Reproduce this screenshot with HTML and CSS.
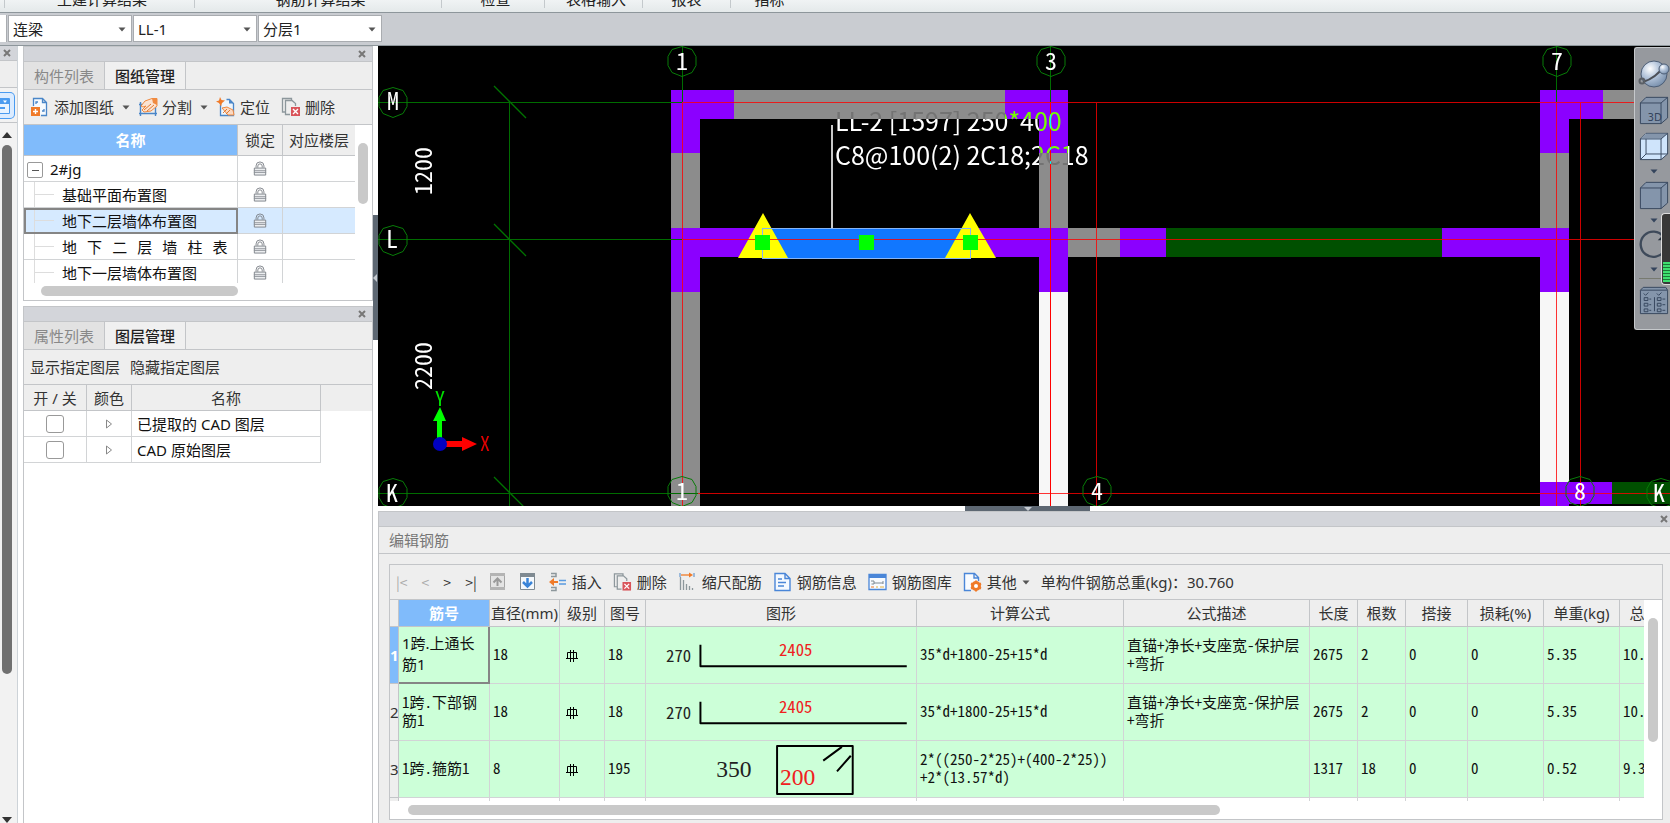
FILE: index.html
```html
<!DOCTYPE html>
<html lang="zh-CN">
<head>
<meta charset="utf-8">
<meta name="viewport" content="width=device-width, initial-scale=1">
<title>编辑钢筋</title>
<link rel="stylesheet" href="styles.css">
</head>
<body>
<svg class="defs" aria-hidden="true">
  <defs>
    <symbol id="lock" viewBox="0 0 16 18">
      <path d="M3.500 8V6a4.500 4.500 0 0 1 9 0v2M5.500 8V6.200a2.500 2.500 0 0 1 5 0V8" fill="none" stroke="#777c82"/>
      <path d="M1.500 8.500h13v8h-13z" fill="#eceef0" stroke="#777c82"/>
      <path d="M1 11.500h14M1 13.500h14" stroke="#8b9096"/>
    </symbol>
    <symbol id="caret" viewBox="0 0 8 5"><path d="M0.500 0.500h7L4 4.500z" fill="currentColor"/></symbol>
    <symbol id="del" viewBox="0 0 20 20">
      <path d="M4.500 15H1.500V1.500h9V4M14.500 9V6.500L11 3.500H4.500v14H9" fill="none" stroke="#8d979c" stroke-width="1.300"/>
      <path d="M10 10h9v9h-9z" fill="#d9545a"/>
      <path d="M12 12l5 5m0-5l-5 5" stroke="#fff" stroke-width="1.400"/>
    </symbol>
    <symbol id="rebar" viewBox="0 0 12 12">
      <path d="M1.500 2.500h9v6h-9zM4.500 0v12M7.500 0v12M0 8.500h12" fill="none" stroke="#000"/>
    </symbol>
  </defs>
</svg>

<header class="ribbon">
  <span class="group group-a">土建计算结果</span>
  <span class="group group-b">钢筋计算结果</span>
  <span class="group group-c">检查</span>
  <span class="group group-d">表格输入</span>
  <span class="group group-e">报表</span>
  <span class="group group-f">指标</span>
</header>

<div class="picker-bar">
  <span class="picker-stub"></span>
  <label class="picker"><select aria-label="构件类型"><option>连梁</option></select><svg class="caret"><use href="#caret"/></svg></label>
  <label class="picker"><select aria-label="构件名称"><option>LL-1</option></select><svg class="caret"><use href="#caret"/></svg></label>
  <label class="picker"><select aria-label="分层"><option>分层1</option></select><svg class="caret"><use href="#caret"/></svg></label>
</div>

<div class="workspace">
  <aside class="rail">
    <div class="dock-head"><button class="close" aria-label="关闭"><svg viewBox="0 0 8 8"><path d="M1 1l6 6M7 1L1 7"/></svg></button></div>
    <div class="rail-tabs"></div>
    <div class="rail-tool">
      <button class="rail-button" aria-label="构件">
        <svg viewBox="0 0 12 20"><path d="M-6 2.500h15.500v15H-6" fill="#e8f3ff" stroke="#4a9bf0"/><path d="M-6 3h15v5H-6z" fill="#4a9bf0"/><path d="M3 4.500h4l-2 2.500z" fill="#fff"/><path d="M-4 12h9" stroke="#4a9bf0" stroke-width="2"/></svg>
      </button>
    </div>
    <div class="rail-scroll">
      <svg class="rail-arrow" viewBox="0 0 10 6"><path d="M0 6h10L5 0z" fill="#333"/></svg>
      <div class="rail-thumb"></div>
      <svg class="rail-arrow" viewBox="0 0 10 6"><path d="M0 0h10L5 6z" fill="#333"/></svg>
    </div>
  </aside>

  <div class="docks">
    <section class="dock drawings">
      <div class="dock-head"><button class="close" aria-label="关闭"><svg viewBox="0 0 8 8"><path d="M1 1l6 6M7 1L1 7"/></svg></button></div>
      <div class="tabs"><button class="tab">构件列表</button><button class="tab active">图纸管理</button></div>
      <div class="tools">
        <button class="tool"><svg viewBox="0 0 20 20"><path d="M3.500 9V1.500h9l4 4v13H11M12.500 1.500v4h4" fill="#f6fafe" stroke="#4a86c8" stroke-width="1.300"/><path d="M6 7V5h2M14 12v2h-2" fill="none" stroke="#4a86c8" stroke-width="1.300"/><path d="M1 10l9 0v9H1z" fill="#f07a28"/><path d="M5.500 12v5M3 14.500h5" stroke="#fff" stroke-width="1.400"/></svg>添加图纸</button>
        <svg class="caret"><use href="#caret"/></svg>
        <button class="tool"><svg viewBox="0 0 20 20"><path d="M1 7.500h18M1 16.500h18M2.500 5v14M17.500 5v14" fill="none" stroke="#4a86c8" stroke-width="1.400"/><path d="M3 9l4-5 7-2.500h5V9l-6 5-7 1-2-2 4-4-3 1z" fill="#fbe3d2" stroke="#f08a40"/><path d="M14 1.500h5V8l-4-2z" fill="#f08a40"/><path d="M6 13l7-6M9 14l7-6" stroke="#e27a30"/></svg>分割</button>
        <svg class="caret"><use href="#caret"/></svg>
        <button class="tool"><svg viewBox="0 0 20 20"><path d="M4.500 8v10.500h13V6.500l-4-4h-3" fill="#eef5fc" stroke="#4a86c8" stroke-width="1.300"/><path d="M13 2.500v4h4.500z" fill="#4a86c8"/><path d="M4 0l1.500 3L9 3.500 6 6l-1 3.500L3 6 0 4.500l3-1z" fill="#f07a28"/><path d="M6 11l5-1 6 3 1 5h-6z" fill="#fbd9c2" stroke="#f08a40"/><path d="M7 16l4-4M10 17l4-4" stroke="#e27a30"/></svg>定位</button>
        <button class="tool"><svg viewBox="0 0 20 20"><use href="#del"/></svg>删除</button>
      </div>
      <div class="tree-area">
        <div class="tree-clip">
          <table class="tree">
            <colgroup><col class="c-name"><col class="c-lock"><col class="c-floor"></colgroup>
            <thead><tr><th class="picked">名称</th><th>锁定</th><th>对应楼层</th></tr></thead>
            <tbody>
              <tr><td class="root"><button class="toggle" aria-label="折叠"></button>2#jg</td><td class="lock"><svg><use href="#lock"/></svg></td><td></td></tr>
              <tr><td class="leaf">基础平面布置图</td><td class="lock"><svg><use href="#lock"/></svg></td><td></td></tr>
              <tr class="current"><td class="leaf">地下二层墙体布置图</td><td class="lock"><svg><use href="#lock"/></svg></td><td></td></tr>
              <tr><td class="leaf">地   下   二   层   墙   柱   表</td><td class="lock"><svg><use href="#lock"/></svg></td><td></td></tr>
              <tr><td class="leaf">地下一层墙体布置图</td><td class="lock"><svg><use href="#lock"/></svg></td><td></td></tr>
            </tbody>
          </table>
        </div>
        <div class="tree-vbar"><i></i></div>
        <div class="tree-hbar"><i></i></div>
      </div>
    </section>

    <section class="dock layers">
      <div class="dock-head"><button class="close" aria-label="关闭"><svg viewBox="0 0 8 8"><path d="M1 1l6 6M7 1L1 7"/></svg></button></div>
      <div class="tabs"><button class="tab">属性列表</button><button class="tab active">图层管理</button></div>
      <div class="tools plain"><button class="tool">显示指定图层</button><button class="tool">隐藏指定图层</button></div>
      <div class="layer-area">
        <table class="layer-table">
          <colgroup><col class="l-on"><col class="l-color"><col class="l-name"></colgroup>
          <thead><tr><th>开 / 关</th><th>颜色</th><th>名称</th></tr></thead>
          <tbody>
            <tr><td class="mid"><input type="checkbox" id="cad-extracted"></td><td class="mid"><svg class="tri" viewBox="0 0 8 10"><path d="M1.500 1v8L6.500 5z"/></svg></td><td><label for="cad-extracted">已提取的 CAD 图层</label></td></tr>
            <tr><td class="mid"><input type="checkbox" id="cad-raw"></td><td class="mid"><svg class="tri" viewBox="0 0 8 10"><path d="M1.500 1v8L6.500 5z"/></svg></td><td><label for="cad-raw">CAD 原始图层</label></td></tr>
          </tbody>
        </table>
      </div>
    </section>
  </div>

  <div class="splitter"><button class="grip" aria-label="收起"><svg viewBox="0 0 4 8"><path d="M4 0v8L0 4z" fill="#c5cad0"/></svg></button></div>

  <main class="stage">
    <div class="canvas">
      <svg class="plan" viewBox="378 46 1292 461" preserveAspectRatio="xMinYMin slice">
        <g shape-rendering="crispEdges">
          <g fill="#8c8c8c">
            <path d="M734 90h271v29H734zM671 153h29v75h-29zM671 292h29v215h-29zM1039 153h29v75h-29zM1068 228h52v29h-52zM1603 90h67v29h-67zM1540 153h29v75h-29z"/>
          </g>
          <path fill="#8b00ff" d="M671 90h63v29h-34v34h-29zM671 228h92v29h-63v35h-29zM1005 90h63v63h-29v-34h-34zM970 228h98v64h-29v-35h-69zM1120 228h46v29h-46zM1442 228h127v64h-29v-35h-98zM1540 90h63v29h-34v34h-29zM1540 482h72v22h-43v3h-29z"/>
          <path fill="#005000" d="M1166 228h276v29h-276zM1612 482h58v22h-58z"/>
          <path fill="#f7f7f7" d="M1039 292h29v215h-29zM1540 292h29v190h-29z"/>
          <path fill="#1177ff" d="M763 228h207v30H763z"/>
        </g>
        <path fill="#ffff00" d="M763 213l25 45h-50zM970 213l26 45h-51z"/>
        <g shape-rendering="crispEdges" fill="none">
          <path d="M763 228.500h207.500v29.500H762.500v-29.500z" stroke="#86b4f5"/>
          <path d="M682 102.500h988M682 239.500h73M770 239.500h89M874 239.500h89M978 239.500h692M698 493.500h972M682.500 102v405M1096.500 102v405M1556.500 102v405M1580.500 102v405" stroke="#ff0000" stroke-opacity="0.800"/>
          <path d="M1050.500 102v405" stroke="#ff0000"/>
          <path d="M378 102.500h304M378 239.500h304M378 493.500h320M509.500 102v405M682.500 46v56M1050.500 46v56M1556.500 46v56" stroke="#006c00"/>
        </g>
        <path fill="#00ff00" d="M755 235h15v15h-15zM859 235h15v15h-15zM963 235h15v15h-15z"/>
        <path d="M494 86l32 32M494 224l32 32M494 477l32 32" stroke="#007400" stroke-width="1.300" fill="none"/>
        <g fill="none" stroke="#087c08">
          <path id="bubble" d="M682 46.500l10 3 4 7v9l-4 7-10 4-10-4-4-7v-9l4-7z"/>
          <use href="#bubble" x="369"/><use href="#bubble" x="875"/><use href="#bubble" x="-289" y="41"/><use href="#bubble" x="-289" y="179"/><use href="#bubble" x="-289" y="432"/><use href="#bubble" y="430"/><use href="#bubble" x="415" y="430"/><use href="#bubble" x="898" y="430"/><use href="#bubble" x="979" y="432"/>
        </g>
        <g class="axis-label">
          <text x="682" y="70">1</text><text x="1051" y="70">3</text><text x="1557" y="70">7</text>
          <text x="393" y="110">M</text><text x="392" y="248">L</text><text x="392" y="502">K</text>
          <text x="682" y="500">1</text><text x="1097" y="500">4</text><text x="1580" y="500">8</text><text x="1659" y="502">K</text>
          <text transform="translate(432 171) rotate(-90)">1200</text>
          <text transform="translate(432 366) rotate(-90)">2200</text>
        </g>
        <path d="M832 125v103" stroke="#c8c8c8" stroke-width="2"/>
        <g class="beam-label"><text x="835" y="131">LL-2 [1597] 250*400</text><text x="835" y="165">C8@100(2) 2C18;2C18</text></g>
        <path d="M437 440v-19h-4l7-14 6 14h-4v19z" fill="#00ff00"/>
        <path d="M444 441h18v-4l15 7-15 7v-4h-18z" fill="#ff0000"/>
        <circle cx="440" cy="444" r="7" fill="#0000c0"/>
        <text class="ucs-y" x="440" y="406">Y</text><text class="ucs-x" x="485" y="451">X</text>
      </svg>

      <div class="viewbar">
        <button aria-label="动态观察"><svg viewBox="0 0 32 30"><defs><radialGradient id="ball" cx="0.350" cy="0.300" r="0.800"><stop offset="0" stop-color="#fff"/><stop offset="0.400" stop-color="#b9c9de"/><stop offset="1" stop-color="#6f87a5"/></radialGradient></defs><circle cx="16" cy="15" r="13" fill="url(#ball)" stroke="#4c5d75"/><path d="M5 23c9-3 15-7 20-15" fill="none" stroke="#4c5058" stroke-width="2"/><circle cx="26" cy="10" r="5" fill="url(#ball)" stroke="#4c5d75"/><circle cx="4" cy="22" r="2.500" fill="none" stroke="#5a5f66" stroke-width="2"/></svg></button>
        <button aria-label="三维"><svg viewBox="0 0 32 32"><path d="M1.500 8.500l6-6h23v22l-7 6h-22z" fill="#8495ab" stroke="#34445c"/><path d="M1.500 8.500h22v22M23.500 8.500l7-6" fill="none" stroke="#34445c"/><text class="cube-text" x="9" y="28">3D</text></svg></button>
        <button aria-label="线框"><svg viewBox="0 0 32 32"><path d="M1.500 8.500l6-6h23v22l-7 6h-22z" fill="#cfe4fb" stroke="#34445c"/><path d="M2 8l6-5h22l-6 5z" fill="#8495ab"/><path d="M1.500 8.500h22v22M23.500 8.500l7-6M7.500 8.500v16h23M7.500 24.500l-6 6" fill="none" stroke="#34445c"/></svg></button>
        <svg class="caret"><use href="#caret"/></svg>
        <button aria-label="实体"><svg viewBox="0 0 32 32"><path d="M1.500 8.500l6-6h23v22l-7 6h-22z" fill="#8495ab" stroke="#34445c"/><path d="M1.500 8.500h22v22M23.500 8.500l7-6" fill="none" stroke="#34445c"/></svg></button>
        <svg class="caret"><use href="#caret"/></svg>
        <button aria-label="旋转"><svg viewBox="0 0 32 32"><path d="M27 23a13.500 13.500 0 1 1-1-15" fill="none" stroke="#3e4a5a" stroke-width="2.500"/><path d="M29 3v9h-9z" fill="#26303c"/></svg></button>
        <svg class="caret"><use href="#caret"/></svg>
        <hr>
        <button aria-label="显示设置"><svg viewBox="0 0 32 32"><path d="M1.500 5.500l3-3h24l2 3v25h-29z" fill="#8495ab" stroke="#34445c"/><path d="M2 5.500h28" stroke="#34445c"/><path d="M5.500 13.500h4v3h-4zM5.500 19.500h4v3h-4zM5.500 25.500h4v3h-4zM19.500 13.500h4v3h-4zM19.500 19.500h4v3h-4zM19.500 25.500h4v3h-4zM5 9l2 2 3-3M19 9l2 2 3-3M11 15h2M11 21h2M11 27h2M25 15h3M25 21h3M25 27h3M16.500 13v15" fill="none" stroke="#34445c"/></svg></button>
      </div>
      <div class="meter"><i></i></div>
    </div>

    <div class="hsplitter"><button class="hgrip" aria-label="收起"><svg viewBox="0 0 8 4"><path d="M0 0h8L4 4z" fill="#c5cad0"/></svg></button></div>

    <section class="editor">
      <div class="dock-head"><button class="close" aria-label="关闭"><svg viewBox="0 0 8 8"><path d="M1 1l6 6M7 1L1 7"/></svg></button></div>
      <h2>编辑钢筋</h2>
      <div class="editor-body">
        <div class="frame">
          <div class="bar">
            <div class="nav"><button class="off">|&lt;</button><button class="off">&lt;</button><button>&gt;</button><button>&gt;|</button></div>
            <button class="tool icon-only" aria-label="上移"><svg viewBox="0 0 19 20"><path d="M2.500 1.500h14v16h-14z" fill="#e4e4e4" stroke="#a5a5a5"/><path d="M2 1h15v3H2zM2 15h15v3H2z" fill="#b4b4b4"/><path d="M9.500 14V7M5.500 10.500l4-4 4 4" fill="none" stroke="#9a9a9a" stroke-width="2"/></svg></button>
            <button class="tool icon-only" aria-label="下移"><svg viewBox="0 0 19 20"><path d="M2.500 1.500h14v16h-14z" fill="#f4f8fc" stroke="#7f8a92"/><path d="M2 1h15v4H2z" fill="#7f8a92"/><path d="M9.500 6v8M5 10l4.500 4.500L14 10" fill="none" stroke="#3a84d8" stroke-width="2.500"/></svg></button>
            <button class="tool"><svg viewBox="0 0 19 20"><path d="M3 1.500h5v3H3M3 18.500h5v-3H3" fill="none" stroke="#8d979c" stroke-width="1.500"/><path d="M1 10l5-4v3h4v2H6v3z" fill="#f07a28"/><path d="M11 8.500h7M11 12h7" stroke="#5a9be0" stroke-width="1.500"/></svg>插入</button>
            <button class="tool"><svg viewBox="0 0 19 20"><use href="#del"/></svg>删除</button>
            <button class="tool"><svg viewBox="0 0 19 20"><path d="M2.500 5v13M5.500 8v10M8.500 12v6M11.500 14v4M14.500 16v2" stroke="#8d979c" stroke-width="1.300"/><path d="M2 1v4M16 1v4" stroke="#4a86c8"/><path d="M3 3h9" stroke="#f07a28" stroke-width="1.300"/><path d="M11 0.500l4 2.500-4 2.500z" fill="#f07a28"/></svg>缩尺配筋</button>
            <button class="tool"><svg viewBox="0 0 19 20"><path d="M2 1.500h10l5 5v12H2zM12 1.500v5h5" fill="#f4f9ff" stroke="#4a86d8" stroke-width="1.400"/><path d="M5 7h4M5 10.500h8M5 14h6" stroke="#4a86d8" stroke-width="1.400"/></svg>钢筋信息</button>
            <button class="tool"><svg viewBox="0 0 19 20"><path d="M1 2.500h17v15H1z" fill="#f8fbff" stroke="#4a86d8" stroke-width="1.300"/><path d="M1 2h17v4H1z" fill="#4a86d8"/><path d="M3 9h3v3H3.500M6 11h9M15 9v3" fill="none" stroke="#7f8a92"/><path d="M3 15h3" stroke="#f07a28"/><path d="M8 15h2M12 15h4" stroke="#e0b040"/></svg>钢筋图库</button>
            <button class="tool"><svg viewBox="0 0 19 20"><path d="M8 18.500H1.500v-17h10l4 4V9M11 1.500v4.500h4" fill="#f8fbff" stroke="#4a86d8" stroke-width="1.400"/><circle cx="13" cy="14" r="3.500" fill="#fff" stroke="#f07a28" stroke-width="3"/><path d="M13 8.500v2M13 17.500v2M8 11.500l2 1M16 15.500l2 1M8 16.500l2-1M16 12.500l2-1" stroke="#f07a28" stroke-width="2"/></svg>其他<svg class="caret"><use href="#caret"/></svg></button>
            <span class="total">单构件钢筋总重(kg)：30.760</span>
          </div>
          <div class="grid-area">
            <div class="grid-clip">
              <table class="grid">
                <colgroup><col class="g-idx"><col class="g-name"><col class="g-dia"><col class="g-grade"><col class="g-no"><col class="g-shape"><col class="g-formula"><col class="g-desc"><col class="g-len"><col class="g-len"><col class="g-lap"><col class="g-wide"><col class="g-wide"><col class="g-wide"></colgroup>
                <thead><tr><th></th><th class="picked">筋号</th><th>直径(mm)</th><th>级别</th><th>图号</th><th>图形</th><th>计算公式</th><th>公式描述</th><th>长度</th><th>根数</th><th>搭接</th><th>损耗(%)</th><th>单重(kg)</th><th>总重(kg)</th></tr></thead>
                <tbody>
                  <tr><th class="picked">1</th><td class="current-cell">1跨.上通长<br>筋1</td><td>18</td><td><svg class="rebar"><use href="#rebar"/></svg></td><td>18</td>
                    <td class="shape"><svg viewBox="0 0 270 57"><text x="18" y="36">270</text><path d="M53 18v22h210"/><text class="red" x="133" y="30">2405</text></svg></td>
                    <td>35*d+1800-25+15*d</td><td>直锚+净长+支座宽-保护层<br>+弯折</td><td>2675</td><td>2</td><td>0</td><td>0</td><td>5.35</td><td>10.7</td></tr>
                  <tr><th>2</th><td>1跨.下部钢<br>筋1</td><td>18</td><td><svg class="rebar"><use href="#rebar"/></svg></td><td>18</td>
                    <td class="shape"><svg viewBox="0 0 270 57"><text x="18" y="36">270</text><path d="M53 18v22h210"/><text class="red" x="133" y="30">2405</text></svg></td>
                    <td>35*d+1800-25+15*d</td><td>直锚+净长+支座宽-保护层<br>+弯折</td><td>2675</td><td>2</td><td>0</td><td>0</td><td>5.35</td><td>10.7</td></tr>
                  <tr><th>3</th><td>1跨.箍筋1</td><td>8</td><td><svg class="rebar"><use href="#rebar"/></svg></td><td>195</td>
                    <td class="shape"><svg viewBox="0 0 270 57"><text class="big" x="69" y="37">350</text><path d="M131 5h77v49h-77zM178 20l19-14M192 31l14-16"/><text class="big red" x="134" y="45">200</text></svg></td>
                    <td>2*((250-2*25)+(400-2*25))<br>+2*(13.57*d)</td><td></td><td>1317</td><td>18</td><td>0</td><td>0</td><td>0.52</td><td>9.36</td></tr>
                  <tr class="blank"><th></th><td></td><td></td><td></td><td></td><td></td><td></td><td></td><td></td><td></td><td></td><td></td><td></td><td></td></tr>
                </tbody>
              </table>
            </div>
            <div class="grid-vbar"><i></i></div>
            <div class="grid-hbar"><i></i></div>
          </div>
        </div>
      </div>
    </section>
  </main>
</div>
</body>
</html>
```
FILE: styles.css
```css
:root {
  --ui: "Noto Sans", "Noto Sans CJK SC", sans-serif;
  --song: "Noto Sans Mono CJK SC", "Liberation Mono", "Noto Sans CJK SC", monospace;
  --line: #c3c5c8;
  --blue: #80bbfb;
}
* { box-sizing: border-box; }
html, body { height: 100%; margin: 0; }
body {
  display: flex;
  flex-direction: column;
  overflow: hidden;
  background: #fff;
  color: #333;
  font: 15px/20px var(--ui);
}
button {
  padding: 0;
  border: 0;
  background: none;
  color: inherit;
  font: inherit;
  white-space: nowrap;
}
svg { display: block; flex: none; }
.defs { position: absolute; width: 0; height: 0; }
.caret { width: 8px; height: 5px; color: #555; }

/* Ribbon */
.ribbon {
  display: flex;
  flex: none;
  align-items: flex-end;
  height: 13px;
  padding-left: 4px;
  overflow: hidden;
  background: linear-gradient(#f0f3f4, #e4e9ea);
  border-bottom: 1px solid #8d969b;
}
.group {
  height: 30px;
  margin-bottom: 4px;
  padding-top: 11px;
  border-left: 1px solid #c4c9cc;
  text-align: center;
  color: #222;
}
.group-a { width: 190px; padding-left: 5px; }
.group-b { width: 247px; padding-left: 5px; }
.group-c { width: 103px; padding-left: 5px; }
.group-d { width: 98px; padding-left: 5px; }
.group-e { width: 88px; }
.group-f { width: 78px; border-right: 0; }

/* Component pickers */
.picker-bar {
  display: flex;
  flex: none;
  gap: 1px;
  height: 33px;
  padding: 2px 0 3px;
  background: #c9ccd1;
  border-bottom: 1px solid #8d969b;
}
.picker-stub { width: 7px; background: #fff; border-right: 1px solid #a9acb0; }
.picker { position: relative; width: 124px; }
.picker select {
  width: 100%;
  height: 100%;
  padding: 0 20px 0 4px;
  border: 1px solid #a9acb0;
  border-radius: 0;
  background: #fff;
  color: #222;
  font: inherit;
  appearance: none;
}
.picker .caret { position: absolute; right: 6px; top: 12px; pointer-events: none; }

.workspace { display: flex; flex: 1; min-height: 0; }

/* Left rail */
.rail { display: flex; flex-direction: column; width: 18px; margin-right: 5px; border-right: 1px solid #cdd3d8; background: #f2f2f2; }
.dock-head {
  display: flex;
  flex: none;
  align-items: center;
  justify-content: flex-end;
  height: 15px;
  padding-right: 6px;
  background: #d3d5da;
  border-bottom: 1px solid var(--line);
}
.close { width: 8px; height: 8px; }
.close svg { width: 8px; height: 8px; }
.close path { fill: none; stroke: #777; stroke-width: 2; }
.rail-tabs { height: 27px; background: #eee; border-bottom: 1px solid var(--line); }
.rail-tool { height: 35px; padding-top: 4px; border-bottom: 1px solid var(--line); }
.rail-button {
  width: 15px;
  height: 27px;
  border: 1px solid #4a9bf0;
  border-left: 0;
  border-radius: 0 5px 5px 0;
  background: #dcecff;
}
.rail-button svg { width: 12px; height: 20px; }
.rail-scroll { display: flex; flex: 1; flex-direction: column; gap: 7px; padding: 9px 0 0 2px; }
.rail-arrow { width: 10px; height: 6px; }
.rail-thumb { width: 10px; height: 529px; margin-bottom: auto; border-radius: 5px; background: #707070; }

/* Docked panels */
.docks { display: flex; flex-direction: column; gap: 5px; width: 350px; }
.dock { border: 1px solid var(--line); background: #eee; }
.layers { display: flex; flex: 1; flex-direction: column; border-bottom: 0; }
.tabs { display: flex; height: 28px; border-bottom: 1px solid var(--line); }
.tab { width: 81px; background: #e2e2e2; border-right: 1px solid var(--line); color: #888; }
.tab.active { background: #f0f0f0; color: #222; font-weight: 500; }
.tools { display: flex; align-items: center; gap: 8px; height: 35px; padding-left: 6px; border-bottom: 1px solid var(--line); }
.tools .tool + .tool { margin-left: 3px; }
.tools.plain { gap: 7px; }
.tool { display: flex; align-items: center; gap: 4px; }
.tool > svg:first-child { width: 20px; height: 20px; }

table { border-spacing: 0; border-collapse: separate; table-layout: fixed; }
th, td { padding: 0; border: solid #d2d4d6; border-width: 0 1px 1px 0; overflow: hidden; white-space: nowrap; }
th { background: #eee; font-weight: 400; text-align: center; color: #333; border-color: var(--line); }
th.picked { background: var(--blue); color: #fff; font-weight: 700; }

.tree-area {
  display: grid;
  grid-template-columns: 1fr 17px;
  grid-template-rows: 158px 17px;
  background: #fff;
}
.tree-clip { overflow: hidden; }
.tree { width: 341px; color: #111; }
.c-name { width: 214px; }
.c-lock { width: 45px; }
.c-floor { width: 82px; }
.tree th { height: 31px; }
.tree th:last-child { padding-right: 9px; }
.tree td { height: 26px; white-space: pre; }
.tree .root { padding-left: 3px; }
.toggle {
  display: inline-block;
  width: 16px;
  height: 16px;
  margin-right: 7px;
  border: 1px solid #999;
  border-radius: 2px;
  background: linear-gradient(#555, #555) center / 7px 1px no-repeat, #fff;
  vertical-align: middle;
}
.tree .leaf {
  padding-left: 38px;
  background: linear-gradient(#ddd, #ddd) 10px 12px / 20px 1px no-repeat, linear-gradient(#ddd, #ddd) 10px 0 / 1px 100% no-repeat;
  font-family: "Noto Sans CJK SC", sans-serif;
}
.tree .current td { background-color: #d6eaff; }
.tree .current .leaf { outline: 2px solid #858585; outline-offset: -2px; }
.lock svg { width: 14px; height: 17px; margin: auto; }
.tree-vbar { padding: 18px 0 0 3px; }
.tree-vbar i { display: block; width: 10px; height: 61px; border-radius: 5px; background: #c9c9c9; }
.tree-hbar { grid-column: 1 / 3; padding: 3px 0 0 17px; }
.tree-hbar i { display: block; width: 197px; height: 10px; border-radius: 5px; background: #c9c9c9; }

.layer-area { flex: 1; background: linear-gradient(#eee, #eee) top / 100% 26px no-repeat #fff; }
.layer-table { width: 297px; color: #111; }
.l-on { width: 63px; }
.l-color { width: 45px; }
.l-name { width: 189px; }
.layer-table th, .layer-table td { height: 26px; }
.layer-table td { padding-left: 5px; background: #fff; }
.layer-table .mid { padding: 0; text-align: center; }
.layer-table input {
  display: block;
  width: 18px;
  height: 18px;
  margin: 0 auto;
  border: 1px solid #999;
  border-radius: 3px;
  background: #fff;
  appearance: none;
}
.tri { width: 8px; height: 10px; margin: auto; }
.tri path { fill: none; stroke: #888; }

.splitter { display: flex; width: 5px; }
.grip {
  display: flex;
  align-items: center;
  width: 5px;
  height: 125px;
  margin-top: 169px;
  background: #5d6772;
}
.grip svg { width: 4px; height: 8px; }

/* Drawing canvas */
.stage { display: flex; flex: 1; flex-direction: column; min-width: 0; }
.canvas { position: relative; flex: 1; min-height: 0; overflow: hidden; background: #000; }
.plan { width: 100%; height: 100%; isolation: isolate; }
.axis-label { fill: #fff; font: 24px var(--song); text-anchor: middle; }
.beam-label { fill: #fff; font: 25px "Noto Sans CJK SC", sans-serif; mix-blend-mode: difference; }
.ucs-x, .ucs-y { font: 20px var(--song); text-anchor: middle; }
.ucs-x { fill: #e00000; }
.ucs-y { fill: #00e000; }
.viewbar {
  position: absolute;
  top: 1px;
  right: 0;
  display: flex;
  flex-direction: column;
  align-items: center;
  gap: 6px;
  width: 36px;
  padding: 11px 0 14px 2px;
  border: solid #c5c8cb;
  border-width: 1px 0 1px 1px;
  border-radius: 3px 0 0 3px;
  background: #96999e;
}
.viewbar button svg { width: 32px; height: 30px; }
.viewbar .caret { margin-top: 2px; color: #34445c; }
.viewbar hr { width: 30px; margin: 0; border: 0; border-top: 1px solid #777a70; }
.cube-text { fill: #34445c; font: 11px "DejaVu Sans", sans-serif; }
.meter {
  position: absolute;
  top: 167px;
  right: 0;
  display: flex;
  align-items: flex-end;
  width: 9px;
  height: 72px;
  padding: 2px 0 2px 1px;
  border: 1px solid #ddd;
  border-right: 0;
  border-radius: 4px 0 0 4px;
  background: #383838;
}
.meter i { width: 100%; height: 20px; background: repeating-linear-gradient(#3fe070 0 2px, #1c7a38 2px 3px); }

.hsplitter { display: flex; flex: none; height: 5px; padding-left: 587px; }
.hgrip { width: 125px; height: 5px; background: #5d6772; }
.hgrip svg { width: 8px; height: 4px; margin: 0 auto; }

/* Rebar editor */
.editor { flex: none; background: #eee; border: solid var(--line); border-width: 1px 0 0 1px; }
.editor .dock-head { padding-right: 2px; }
.editor h2 { height: 27px; margin: 0; padding-left: 10px; border-bottom: 1px solid var(--line); color: #777; font: 15px/26px var(--ui); }
.editor-body { padding: 10px 7px 3px 10px; }
.frame { border: 1px solid var(--line); }
.bar { display: flex; align-items: center; gap: 11px; height: 35px; padding-left: 6px; border-bottom: 1px solid var(--line); }
.bar .tool { gap: 5px; }
.bar .tool > svg:first-child { width: 19px; height: 20px; }
.nav { display: flex; align-items: center; gap: 14px; }
.nav button { font: 14px/20px "Noto Sans CJK SC", sans-serif; }
.nav .off { color: #aaa; }
.icon-only { width: 19px; }
.total { white-space: nowrap; }

.grid-area { display: grid; grid-template-columns: 1fr 18px; grid-template-rows: 201px 18px; background: #fff; }
.grid-clip { overflow: hidden; }
.grid { width: 1305px; color: #111; }
.g-idx { width: 9px; }
.g-name { width: 91px; }
.g-dia { width: 70px; }
.g-grade { width: 45px; }
.g-no { width: 41px; }
.g-shape { width: 271px; }
.g-formula { width: 207px; }
.g-desc { width: 186px; }
.g-len { width: 48px; }
.g-lap { width: 62px; }
.g-wide { width: 76px; }
.grid thead th { height: 27px; }
.grid td { height: 57px; padding: 0 0 2px 3px; background: #ccffd8; font: 15px/18px var(--song); }
.grid .current-cell { border: solid #858585; border-width: 0 2px 2px 0; font: 15px/21px var(--ui); }
.grid tbody th.picked { font-weight: 700; }
.grid td.shape { padding: 0; }
.grid .shape svg { width: 270px; height: 56px; }
.shape path { fill: none; stroke: #000; stroke-width: 2; stroke-linejoin: round; }
.shape text { fill: #222; font: 17px var(--song); }
.shape text.big { font: 24px "Liberation Serif", serif; }
.shape text.red { fill: #f02020; }
.grid .rebar { width: 12px; height: 12px; margin: 4px 0 0 3px; }
.grid .blank td { height: 10px; background: #fff; }
.grid-vbar { padding: 18px 0 0 4px; }
.grid-vbar i { display: block; width: 10px; height: 124px; border-radius: 5px; background: #c9c9c9; }
.grid-hbar { grid-column: 1 / 3; padding: 4px 0 0 18px; }
.grid-hbar i { display: block; width: 812px; height: 10px; border-radius: 5px; background: #c9c9c9; }
```
